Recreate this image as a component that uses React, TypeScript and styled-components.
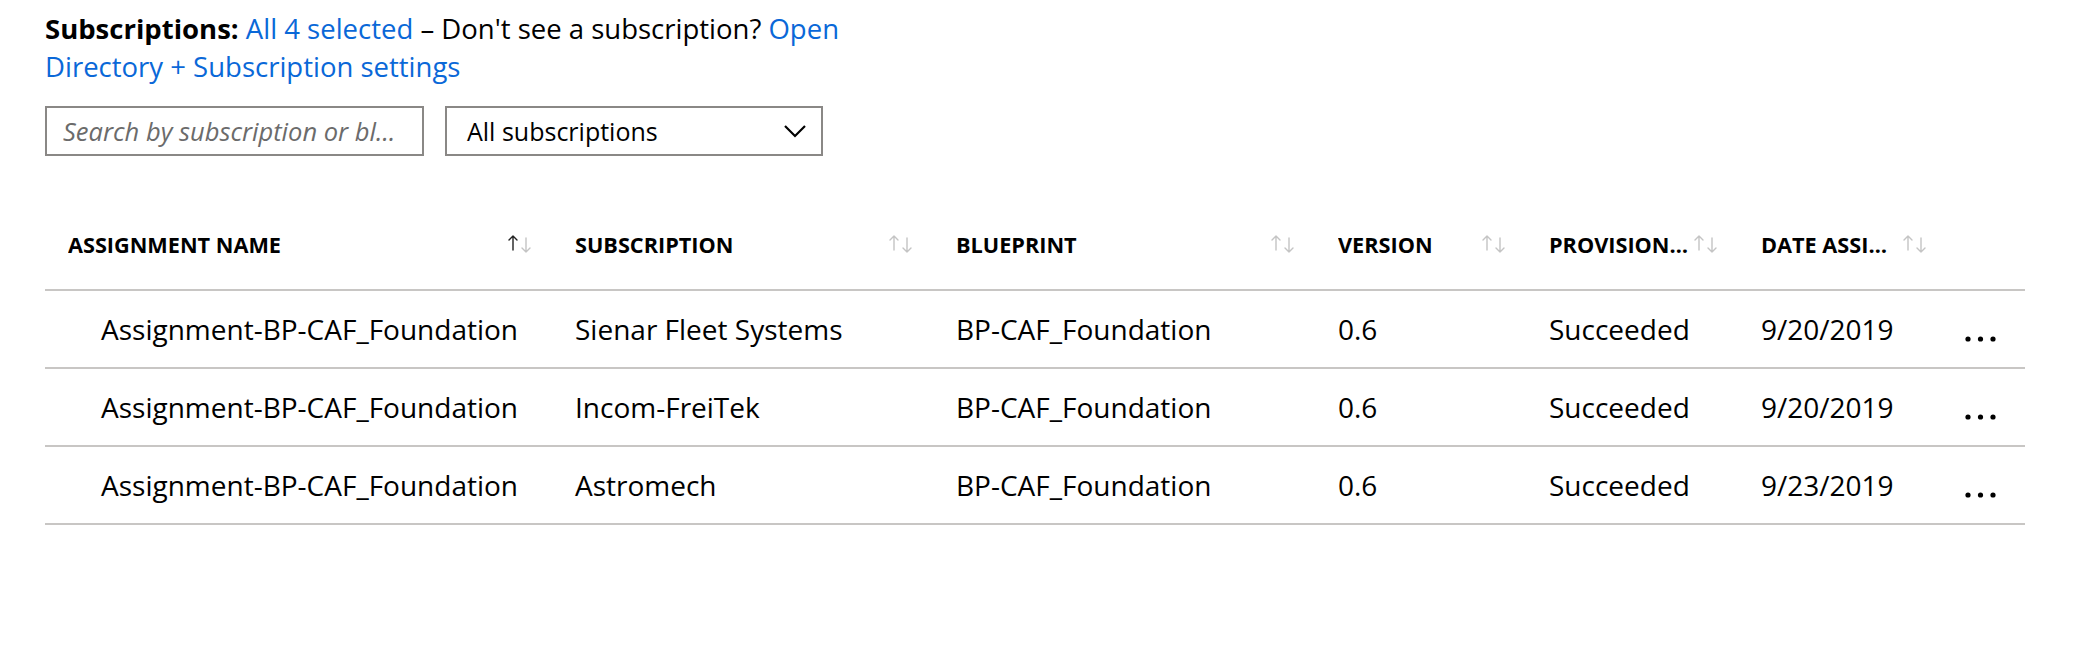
import React from "react"
import styled, { createGlobalStyle } from "styled-components"

const GlobalStyle = createGlobalStyle`
  body {
    margin: 0;
    background: #ffffff;
    font-family: "Open Sans", "Noto Sans", "Liberation Sans", sans-serif;
    color: #000000;
  }
`

const linkColor = "#0a68d8"
const lineColor = "#c8c6c4"

type Column = {
  key: string
  label: string
  width: number
  indent?: number
}

const columns: Column[] = [
  { key: "name", label: "ASSIGNMENT NAME", width: 507, indent: 56 },
  { key: "subscription", label: "SUBSCRIPTION", width: 381 },
  { key: "blueprint", label: "BLUEPRINT", width: 382 },
  { key: "version", label: "VERSION", width: 211 },
  { key: "state", label: "PROVISIONING STATE", width: 212 },
  { key: "date", label: "DATE ASSIGNED", width: 209 },
]

type Assignment = {
  name: string
  subscription: string
  blueprint: string
  version: string
  state: string
  date: string
}

const assignments: Assignment[] = [
  {
    name: "Assignment-BP-CAF_Foundation",
    subscription: "Sienar Fleet Systems",
    blueprint: "BP-CAF_Foundation",
    version: "0.6",
    state: "Succeeded",
    date: "9/20/2019",
  },
  {
    name: "Assignment-BP-CAF_Foundation",
    subscription: "Incom-FreiTek",
    blueprint: "BP-CAF_Foundation",
    version: "0.6",
    state: "Succeeded",
    date: "9/20/2019",
  },
  {
    name: "Assignment-BP-CAF_Foundation",
    subscription: "Astromech",
    blueprint: "BP-CAF_Foundation",
    version: "0.6",
    state: "Succeeded",
    date: "9/23/2019",
  },
]

const gridTemplate = `${columns.map((c) => `${c.width}px`).join(" ")} 78px`

const Page = styled.div`
  padding: 10px 0 0 45px;
`

const Intro = styled.p`
  margin: 0;
  width: 860px;
  font-size: 27.5px;
  line-height: 38px;
`

const Strong = styled.span`
  font-weight: 700;
`

const Link = styled.a`
  color: ${linkColor};
  text-decoration: none;
  cursor: pointer;
`

const Filters = styled.div`
  display: flex;
  gap: 21px;
  margin-top: 20px;
`

const SearchBox = styled.input`
  box-sizing: border-box;
  width: 379px;
  height: 50px;
  border: 2px solid #8a8886;
  padding: 0 16px;
  font-family: inherit;
  font-size: 25.5px;
  outline: none;
  text-overflow: ellipsis;

  &::placeholder {
    color: #6b6b6b;
    font-style: italic;
  }
`

const Dropdown = styled.button`
  box-sizing: border-box;
  width: 378px;
  height: 50px;
  border: 2px solid #8a8886;
  background: #ffffff;
  padding: 0 14px 0 20px;
  display: flex;
  align-items: center;
  justify-content: space-between;
  font-family: inherit;
  font-size: 25px;
  color: #000000;
`

const Table = styled.div`
  width: 1980px;
  margin-top: 45px;
`

const HeaderRow = styled.div`
  display: grid;
  grid-template-columns: ${gridTemplate};
  height: 90px;
  border-bottom: 2px solid ${lineColor};
  box-sizing: border-box;
`

const HeaderCell = styled.div`
  display: flex;
  align-items: center;
  justify-content: space-between;
  gap: 4px;
  padding: 0 19px 2px 23px;
  min-width: 0;
  font-size: 21.7px;
  font-weight: 700;
`

const HeaderLabel = styled.span`
  overflow: hidden;
  white-space: nowrap;
  text-overflow: ellipsis;
  min-width: 0;
`

const Row = styled.div`
  display: grid;
  grid-template-columns: ${gridTemplate};
  height: 78px;
  border-bottom: 2px solid ${lineColor};
  box-sizing: border-box;
`

const Cell = styled.div<{ $indent?: number }>`
  display: flex;
  align-items: center;
  padding-left: ${(p) => p.$indent ?? 23}px;
  font-size: 28px;
  white-space: nowrap;
  overflow: hidden;
`

const MoreCell = styled.div`
  display: flex;
  align-items: center;
  padding: 20px 0 0 17px;
`

const SortIcon = ({ active }: { active?: boolean }) => (
  <svg width="26" height="20" viewBox="0 0 26 20" style={{ flexShrink: 0 }}>
    <g fill="none" strokeWidth="1.4" strokeLinecap="round" strokeLinejoin="round">
      <path d="M6 2 V16 M2 6 L6 2 L10 6" stroke={active ? "#222222" : "#c4c4c4"} />
      <path d="M19 4 V18 M15 14 L19 18 L23 14" stroke="#c4c4c4" />
    </g>
  </svg>
)

const Chevron = () => (
  <svg width="24" height="14" viewBox="0 0 24 14">
    <path d="M2 2 L12 12 L22 2" fill="none" stroke="#000000" strokeWidth="2.2" />
  </svg>
)

const MoreIcon = () => (
  <svg width="34" height="8" viewBox="0 0 34 8">
    <circle cx="4" cy="4" r="2.6" fill="#000000" />
    <circle cx="16.5" cy="4" r="2.6" fill="#000000" />
    <circle cx="29" cy="4" r="2.6" fill="#000000" />
  </svg>
)

const App = () => {
  return (
    <Page>
      <GlobalStyle />
      <Intro>
        <Strong>Subscriptions:</Strong> <Link>All 4 selected</Link> – Don't see a subscription?{" "}
        <Link>Open Directory + Subscription settings</Link>
      </Intro>
      <Filters>
        <SearchBox placeholder="Search by subscription or blueprint name" />
        <Dropdown>
          <span>All subscriptions</span>
          <Chevron />
        </Dropdown>
      </Filters>
      <Table>
        <HeaderRow>
          {columns.map((c, i) => (
            <HeaderCell key={c.key}>
              <HeaderLabel>{c.label}</HeaderLabel>
              <SortIcon active={i === 0} />
            </HeaderCell>
          ))}
          <div />
        </HeaderRow>
        {assignments.map((a, i) => (
          <Row key={i}>
            {columns.map((c) => (
              <Cell key={c.key} $indent={c.indent}>
                {a[c.key as keyof Assignment]}
              </Cell>
            ))}
            <MoreCell>
              <MoreIcon />
            </MoreCell>
          </Row>
        ))}
      </Table>
    </Page>
  )
}

export default App
